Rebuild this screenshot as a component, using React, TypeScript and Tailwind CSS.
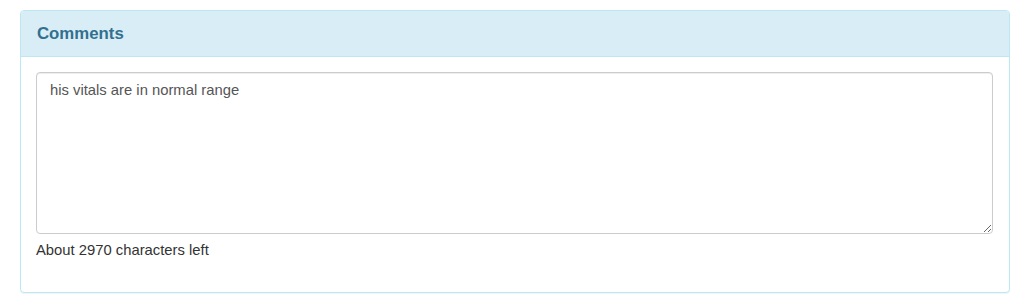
export default function App() {
  return (
    <div className="min-h-screen bg-white pt-[10px] px-[14px] font-['Liberation_Sans',Arial,sans-serif] text-[14.8px] text-[#333]">
      <div className="ml-[6px] w-[990px] rounded-[4px] border border-[#bce8f1] bg-white shadow-[0_1px_1px_rgba(0,0,0,0.05)]">
        <div className="rounded-t-[3px] border-b border-[#bce8f1] bg-[#d9edf7] px-[16px] py-[10px]">
          <h3 className="text-[16.8px] font-bold leading-[25px] text-[#31708f]">Comments</h3>
        </div>
        <div className="px-[15px] pt-[15px] pb-[32px]">
          <textarea
            defaultValue="his vitals are in normal range"
            className="block h-[162px] w-[957px] resize-y rounded-[4px] border border-[#ccc] px-[13px] py-[7px] text-[14.8px] leading-[20px] text-[#555] shadow-[inset_0_1px_1px_rgba(0,0,0,0.075)] outline-none"
          />
          <p className="mt-[6px] leading-[20px]">About 2970 characters left</p>
        </div>
      </div>
    </div>
  )
}
